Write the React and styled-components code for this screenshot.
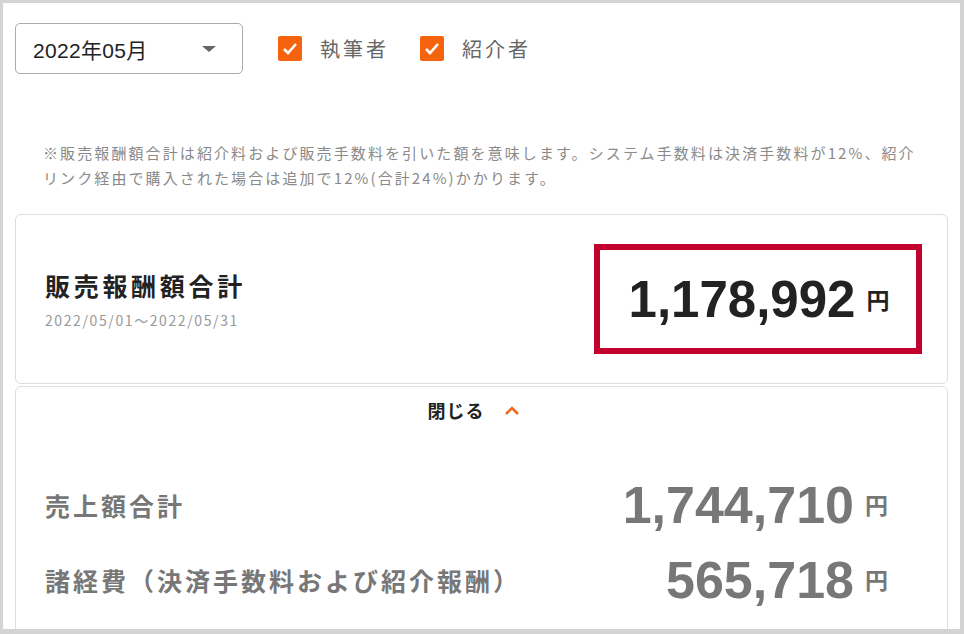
import React from "react";
import styled, { createGlobalStyle } from "styled-components";

const GlobalStyle = createGlobalStyle`
    body {
        margin: 0;
        font-family: "Liberation Sans", "Noto Sans CJK JP", sans-serif;
        background: #fff;
    }
`;

function Check({ label }) {
    return (
        <CheckItem>
            <Box>
                <svg width="16" height="13" viewBox="0 0 16 13">
                    <polyline points="2,7 6,11 14,2" fill="none" stroke="#fff" strokeWidth="2.6" />
                </svg>
            </Box>
            <span>{label}</span>
        </CheckItem>
    );
}

function Amount({ value, dark }) {
    return (
        <AmountWrap>
            <Num $dark={dark}>{value}</Num>
            <Yen $dark={dark}>円</Yen>
        </AmountWrap>
    );
}

export default function App() {
    return (
        <>
            <GlobalStyle />
            <Frame>
                <Toolbar>
                    <Select>
                        <span>2022年05月</span>
                        <Caret />
                    </Select>
                    <Check label="執筆者" />
                    <Check label="紹介者" />
                </Toolbar>

                <Note>
                    ※販売報酬額合計は紹介料および販売手数料を引いた額を意味します。システム手数料は決済手数料が12%、紹介リンク経由で購入された場合は追加で12%(合計24%)かかります。
                </Note>

                <SummaryCard>
                    <div>
                        <Title>販売報酬額合計</Title>
                        <Period>2022/05/01〜2022/05/31</Period>
                    </div>
                    <Highlight>
                        <Amount value="1,178,992" dark />
                    </Highlight>
                </SummaryCard>

                <DetailCard>
                    <Toggle>
                        <span>閉じる</span>
                        <svg width="16" height="11" viewBox="0 0 16 11">
                            <polyline points="2,9 8,3 14,9" fill="none" stroke="#f06a1a" strokeWidth="2.6" />
                        </svg>
                    </Toggle>
                    <Rows>
                        <Row>
                            <RowLabel>売上額合計</RowLabel>
                            <Amount value="1,744,710" />
                        </Row>
                        <Row>
                            <RowLabel>諸経費（決済手数料および紹介報酬）</RowLabel>
                            <Amount value="565,718" />
                        </Row>
                    </Rows>
                </DetailCard>
            </Frame>
        </>
    );
}

const Frame = styled.div`
    width: 964px;
    height: 634px;
    box-sizing: border-box;
    border: 3px solid #d3d3d3;
    border-right-width: 4px;
    border-bottom-width: 5px;
    padding: 20px 12px 0 12px;
    overflow: hidden;
`;

const Toolbar = styled.div`
    display: flex;
    align-items: center;
`;

const Select = styled.div`
    width: 228px;
    height: 51px;
    box-sizing: border-box;
    border: 1px solid #aaa;
    border-radius: 5px;
    display: flex;
    align-items: center;
    justify-content: space-between;
    padding: 0 26px 0 17px;
    font-size: 21px;
    letter-spacing: 0.3px;
    color: #222;
    margin-right: 35px;
`;

const Caret = styled.span`
    width: 0;
    height: 0;
    border-left: 7px solid transparent;
    border-right: 7px solid transparent;
    border-top: 6px solid #666;
`;

const CheckItem = styled.label`
    display: flex;
    align-items: center;
    gap: 18px;
    margin-right: 31px;
    font-size: 20px;
    letter-spacing: 3px;
    color: #666;
`;

const Box = styled.span`
    width: 24px;
    height: 25px;
    border-radius: 2px;
    background: #f5640c;
    display: flex;
    align-items: center;
    justify-content: center;
`;

const Note = styled.p`
    margin: 66px 0 0;
    padding: 0 16px 0 28px;
    font-family: "Noto Sans CJK JP", sans-serif;
    font-size: 15px;
    letter-spacing: 2.1px;
    line-height: 25px;
    color: #8a8a8a;
`;

const Card = styled.div`
    border: 1px solid #ddd;
    border-radius: 6px;
    background: #fff;
`;

const SummaryCard = styled(Card)`
    margin-top: 24px;
    height: 170px;
    box-sizing: border-box;
    display: flex;
    align-items: center;
    justify-content: space-between;
    padding: 0 25px 0 29px;
`;

const Title = styled.div`
    font-family: "Noto Sans CJK JP", sans-serif;
    font-size: 25px;
    font-weight: 700;
    letter-spacing: 3.7px;
    line-height: 34px;
    color: #222;
`;

const Period = styled.div`
    margin-top: 8px;
    font-family: "Noto Sans CJK JP", sans-serif;
    font-size: 14px;
    letter-spacing: 1.6px;
    line-height: 20px;
    color: #999;
`;

const Highlight = styled.div`
    width: 328px;
    height: 110px;
    box-sizing: border-box;
    border: 6px solid #c1002d;
    display: flex;
    align-items: center;
    justify-content: center;
    padding-left: 2px;
`;

const AmountWrap = styled.div`
    display: flex;
    align-items: center;
    gap: 11px;
`;

const Num = styled.span`
    font-family: "Liberation Sans", Arial, sans-serif;
    font-weight: 700;
    font-size: ${(p) => (p.$dark ? "51px" : "52px")};
    line-height: 1;
    color: ${(p) => (p.$dark ? "#222" : "#777")};
`;

const Yen = styled.span`
    font-family: "Noto Sans CJK JP", sans-serif;
    font-weight: 700;
    font-size: 23px;
    line-height: 1;
    color: ${(p) => (p.$dark ? "#222" : "#777")};
`;

const DetailCard = styled(Card)`
    margin-top: 2px;
    height: 300px;
`;

const Toggle = styled.div`
    display: flex;
    align-items: center;
    justify-content: center;
    gap: 19px;
    padding: 11px 16px 0 0;
    font-family: "Noto Sans CJK JP", sans-serif;
    font-size: 18px;
    font-weight: 700;
    letter-spacing: 1px;
    line-height: 24px;
    color: #222;
`;

const Rows = styled.div`
    margin-top: 45px;
`;

const Row = styled.div`
    height: 75px;
    display: flex;
    align-items: center;
    justify-content: space-between;
    padding: 0 59px 0 29px;
`;

const RowLabel = styled.span`
    font-family: "Noto Sans CJK JP", sans-serif;
    font-size: 25px;
    font-weight: 700;
    letter-spacing: 3px;
    color: #777;
`;
